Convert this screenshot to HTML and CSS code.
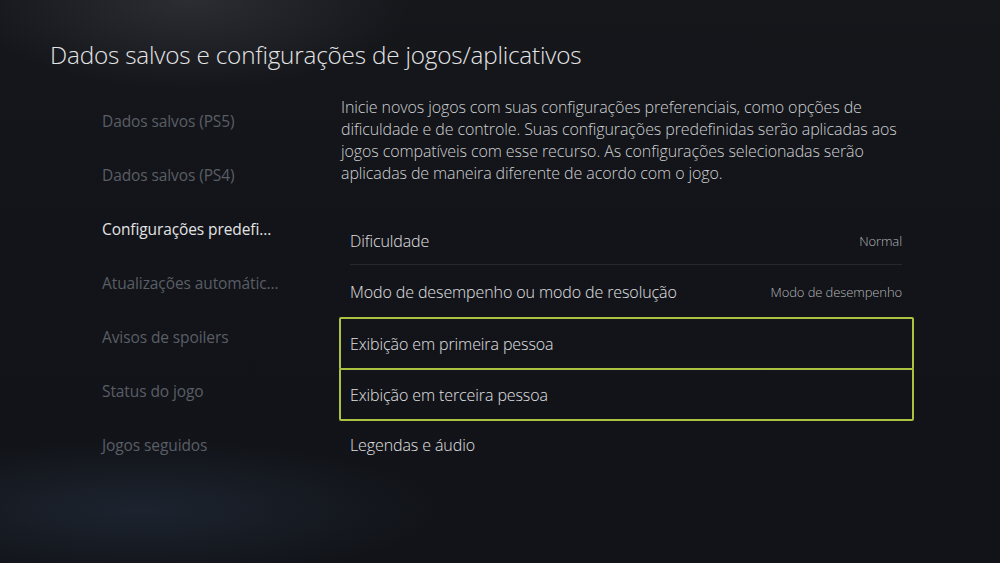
FILE: index.html
```html
<!DOCTYPE html>
<html lang="pt-BR">
<head>
<meta charset="utf-8">
<title>Dados salvos e configurações de jogos/aplicativos</title>
<link rel="stylesheet" href="styles.css">
</head>
<body>
<div class="screen">
  <header class="header">
    <h1 class="title">Dados salvos e configurações de jogos/aplicativos</h1>
  </header>
  <main class="main">
    <nav class="nav">
      <div class="nav-item">Dados salvos (PS5)</div>
      <div class="nav-item">Dados salvos (PS4)</div>
      <div class="nav-item active">Configurações predefi...</div>
      <div class="nav-item">Atualizações automátic...</div>
      <div class="nav-item">Avisos de spoilers</div>
      <div class="nav-item">Status do jogo</div>
      <div class="nav-item">Jogos seguidos</div>
    </nav>
    <section class="content">
      <p class="desc">Inicie novos jogos com suas configurações preferenciais, como opções de dificuldade e de controle. Suas configurações predefinidas serão aplicadas aos jogos compatíveis com esse recurso. As configurações selecionadas serão aplicadas de maneira diferente de acordo com o jogo.</p>
      <div class="list">
        <div class="row divided"><span class="label">Dificuldade</span><span class="value">Normal</span></div>
        <div class="row"><span class="label">Modo de desempenho ou modo de resolução</span><span class="value">Modo de desempenho</span></div>
        <div class="row selected"><span class="label">Exibição em primeira pessoa</span></div>
        <div class="row selected"><span class="label">Exibição em terceira pessoa</span></div>
        <div class="row"><span class="label">Legendas e áudio</span></div>
      </div>
    </section>
  </main>
</div>
</body>
</html>
```
FILE: styles.css
```css
html, body {
  margin: 0;
  padding: 0;
  width: 1000px;
  height: 563px;
  overflow: hidden;
}
body {
  font-family: "Open Sans", "Noto Sans", sans-serif;
  background: #111318;
}
.screen {
  width: 1000px;
  height: 563px;
  box-sizing: border-box;
  background:
    radial-gradient(ellipse 220px 90px at 190px 0px, rgba(70,72,80,0.45), rgba(0,0,0,0) 100%),
    radial-gradient(ellipse 300px 70px at 140px 510px, rgba(40,52,70,0.5), rgba(0,0,0,0) 100%),
    linear-gradient(180deg, #15171b 0%, #121419 40%, #111318 100%);
}
.header {
  padding: 38px 0 0 50px;
  height: 58px;
}
.title {
  margin: 0;
  font-size: 24.3px;
  font-weight: 300;
  line-height: 34px;
  color: #e4e4e6;
  letter-spacing: -0.2px;
}
.main {
  display: grid;
  grid-template-columns: 237px 575px;
  column-gap: 0;
  padding-left: 102px;
}
.nav {
  display: flex;
  flex-direction: column;
  margin-top: -2px;
}
.nav-item {
  height: 54px;
  line-height: 54px;
  font-size: 15.5px;
  font-weight: 400;
  color: #5a5e66;
  white-space: nowrap;
  letter-spacing: -0.1px;
}
.nav-item.active {
  color: #e2e2e4;
}
.content {
  display: flex;
  flex-direction: column;
}
.desc {
  margin: 0 0 31px 2px;
  width: 570px;
  font-size: 16px;
  line-height: 22px;
  font-weight: 300;
  color: #cfd0d2;
  letter-spacing: -0.1px;
}
.list {
  display: flex;
  flex-direction: column;
}
.row {
  position: relative;
  height: 51px;
  box-sizing: border-box;
  border: 2px solid transparent;
  border-radius: 2px;
  padding: 0 10px 0 9px;
  display: flex;
  align-items: center;
  justify-content: space-between;
}
.row.divided::after {
  content: "";
  position: absolute;
  left: 9px;
  right: 10px;
  bottom: -1px;
  height: 1px;
  background: #26282d;
}
.row.selected {
  border-color: #a9c23f;
  height: 53px;
  margin-bottom: -2px;
}
.label {
  font-size: 16px;
  font-weight: 300;
  color: #e0e0e2;
  letter-spacing: -0.1px;
}
.value {
  font-size: 13px;
  font-weight: 300;
  color: #b4b5b8;
  letter-spacing: -0.1px;
}
```
